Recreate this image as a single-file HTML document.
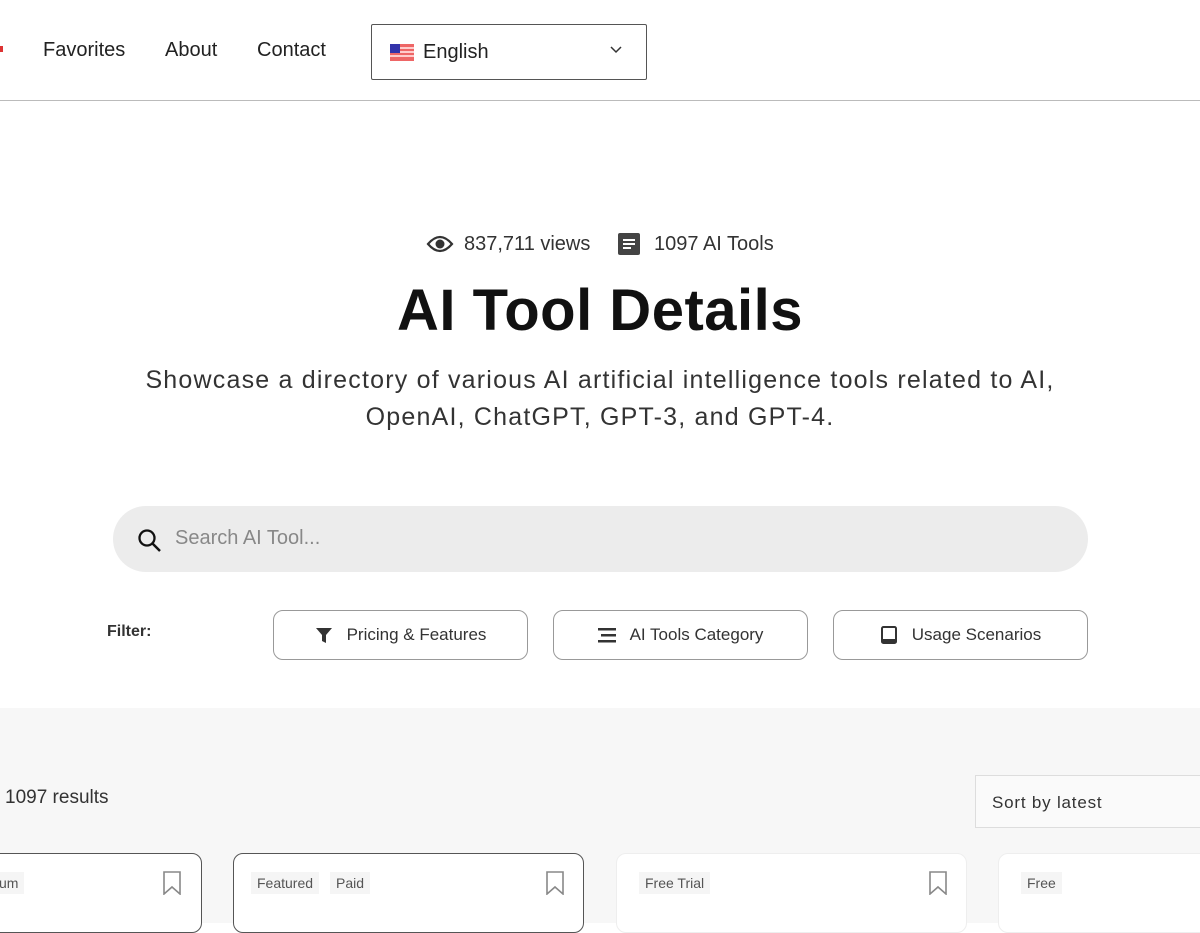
<!DOCTYPE html>
<html><head><style>
*{box-sizing:border-box;margin:0;padding:0}
body{width:1200px;height:923px;overflow:hidden;background:#fff;font-family:"Liberation Sans",sans-serif;color:#222;position:relative}
.a{position:absolute}
.nav{font-size:20px;color:#222;top:39px}
.btn{position:absolute;top:610px;height:50px;border:1px solid #999;border-radius:10px;font-size:17px;color:#333;display:flex;align-items:center;justify-content:center;gap:14px;background:#fff}
.card{position:absolute;top:853px;height:80px;background:#fff;border-radius:10px}
.tag{position:absolute;top:18px;font-size:14px;color:#555;background:#f5f5f5;padding:3px 6px}
.bm{position:absolute;top:17px;width:18px;height:24px}
</style></head><body>
<div class="a" style="left:0;top:46px;width:3px;height:6px;background:#d33"></div>
<div class="a nav" style="left:43px">Favorites</div>
<div class="a nav" style="left:165px">About</div>
<div class="a nav" style="left:257px">Contact</div>
<div class="a" style="left:371px;top:24px;width:276px;height:56px;border:1px solid #555;border-radius:2px"></div>
<svg class="a" style="left:390px;top:44px" width="24" height="17"><rect width="24" height="17" fill="#e66"/><rect y="3" width="24" height="2" fill="#fcc"/><rect y="7" width="24" height="2" fill="#fcc"/><rect y="11" width="24" height="2" fill="#fcc"/><rect width="10" height="9" fill="#33a"/></svg>
<div class="a" style="left:423px;top:41px;font-size:20px">English</div>
<svg class="a" style="left:610px;top:46px" width="12" height="8"><path d="M1 1l5 5 5-5" stroke="#333" fill="none" stroke-width="1.5"/></svg>
<div class="a" style="left:0;top:100px;width:1200px;height:1px;background:#bbb"></div>

<svg class="a" style="left:426px;top:234px" width="28" height="20"><path d="M2 10Q14-4 26 10Q14 24 2 10Z" fill="none" stroke="#333" stroke-width="2.2"/><circle cx="14" cy="10" r="4.5" fill="#333"/></svg>
<div class="a" style="left:464px;top:233px;font-size:20px;color:#333">837,711 views</div>
<svg class="a" style="left:618px;top:233px" width="22" height="22"><rect width="22" height="22" rx="2" fill="#444"/><rect x="5" y="6" width="12" height="2" fill="#fff"/><rect x="5" y="10" width="12" height="2" fill="#fff"/><rect x="5" y="14" width="8" height="2" fill="#fff"/></svg>
<div class="a" style="left:654px;top:233px;font-size:20px;color:#333">1097 AI Tools</div>
<div class="a" style="left:0;width:1200px;top:277px;text-align:center;font-size:58px;font-weight:bold;color:#111;letter-spacing:0.5px">AI Tool Details</div>
<div class="a" style="left:50px;width:1100px;top:362px;text-align:center;font-size:25px;line-height:37px;color:#333;letter-spacing:1.2px">Showcase a directory of various AI artificial intelligence tools related to AI,<br>OpenAI, ChatGPT, GPT-3, and GPT-4.</div>

<div class="a" style="left:113px;top:506px;width:975px;height:66px;border-radius:33px;background:#ececec"></div>
<svg class="a" style="left:137px;top:528px" width="25" height="25"><circle cx="10" cy="10" r="7.5" fill="none" stroke="#111" stroke-width="2.3"/><path d="M15.5 15.5L23 23" stroke="#111" stroke-width="2.5"/></svg>
<div class="a" style="left:175px;top:527px;font-size:20px;color:#888">Search AI Tool...</div>

<div class="a" style="left:107px;top:623px;font-size:16px;color:#333;font-weight:bold">Filter:</div>
<div class="btn" style="left:273px;width:255px"><svg width="18" height="18"><path d="M1 2h16l-6 7v8l-4-2V9z" fill="#333"/></svg>Pricing &amp; Features</div>
<div class="btn" style="left:553px;width:255px"><svg width="18" height="16"><rect y="1" width="18" height="2.5" fill="#333"/><rect x="3" y="7" width="15" height="2.5" fill="#333"/><rect y="13" width="18" height="2.5" fill="#333"/></svg>AI Tools Category</div>
<div class="btn" style="left:833px;width:255px"><svg width="18" height="18"><rect x="2" y="1" width="14" height="16" rx="1.5" fill="none" stroke="#333" stroke-width="2"/><rect x="2" y="13" width="14" height="4" fill="#333"/></svg>Usage Scenarios</div>

<div class="a" style="left:0;top:708px;width:1200px;height:215px;background:#f7f7f7"></div>
<div class="a" style="left:5px;top:787px;font-size:19px;color:#333">1097 results</div>
<div class="a" style="left:975px;top:775px;width:240px;height:53px;border:1px solid #ddd;background:#fafafa;padding:17px 16px;font-size:17px;color:#333;letter-spacing:0.8px">Sort by latest</div>

<div class="card" style="left:-20px;width:222px;border:1px solid #555"><span class="tag" style="left:12px">um</span><svg class="bm" style="left:182px" viewBox="0 0 18 24"><path d="M1 1h16v22l-8-7-8 7z" fill="none" stroke="#888" stroke-width="1.6"/></svg></div>
<div class="card" style="left:233px;width:351px;border:1px solid #555"><span class="tag" style="left:17px">Featured</span><span class="tag" style="left:96px">Paid</span><svg class="bm" style="left:312px" viewBox="0 0 18 24"><path d="M1 1h16v22l-8-7-8 7z" fill="none" stroke="#888" stroke-width="1.6"/></svg></div>
<div class="card" style="left:616px;width:351px;border:1px solid #eee"><span class="tag" style="left:22px">Free Trial</span><svg class="bm" style="left:312px" viewBox="0 0 18 24"><path d="M1 1h16v22l-8-7-8 7z" fill="none" stroke="#888" stroke-width="1.6"/></svg></div>
<div class="card" style="left:998px;width:250px;border:1px solid #eee"><span class="tag" style="left:22px">Free</span></div>
</body></html>
